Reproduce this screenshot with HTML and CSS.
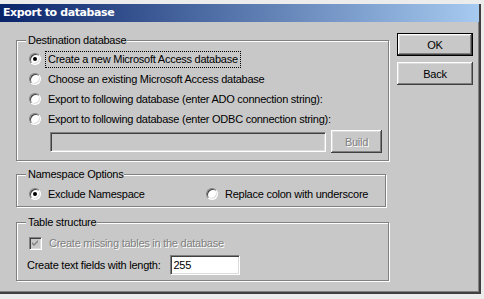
FILE: index.html
```html
<!DOCTYPE html>
<html>
<head>
<meta charset="utf-8">
<link rel="stylesheet" href="styles.css">
</head>
<body>
<div class="window">
  <div class="titlebar">Export to database</div>
  <div class="client">
    <div class="left">
      <div class="group g1">
        <div class="legend">Destination database</div>
        <div class="row"><span class="radio checked"></span><span class="label focus">Create a new Microsoft Access database</span></div>
        <div class="row"><span class="radio"></span><span class="label">Choose an existing Microsoft Access database</span></div>
        <div class="row"><span class="radio"></span><span class="label">Export to following database (enter ADO connection string):</span></div>
        <div class="row"><span class="radio"></span><span class="label">Export to following database (enter ODBC connection string):</span></div>
        <div class="connrow">
          <div class="field disabled"></div>
          <div class="btn build">Build</div>
        </div>
      </div>
      <div class="group g2">
        <div class="legend">Namespace Options</div>
        <div class="row ns">
          <div class="nsitem first"><span class="radio checked"></span><span class="label">Exclude Namespace</span></div>
          <div class="nsitem"><span class="radio"></span><span class="label">Replace colon with underscore</span></div>
        </div>
      </div>
      <div class="group g3">
        <div class="legend">Table structure</div>
        <div class="row chkrow">
          <span class="check">
            <svg width="7" height="7" viewBox="0 0 7 7"><path d="M0 2 L2 4 L6 0 L6 2 L2 6 L0 4 Z" fill="#808080"/></svg>
          </span>
          <span class="label dis">Create missing tables in the database</span>
        </div>
        <div class="lenrow">
          <span class="plain">Create text fields with length:</span>
          <div class="field len">255</div>
        </div>
      </div>
    </div>
    <div class="right">
      <div class="btn default">OK</div>
      <div class="btn">Back</div>
    </div>
  </div>
</div>
</body>
</html>
```

FILE: styles.css
```css
html, body {
  margin: 0;
  padding: 0;
  background: #ececec;
}
body {
  font-family: "Liberation Sans", Arial, sans-serif;
  font-size: 11px;
  letter-spacing: -0.25px;
  color: #000;
  white-space: nowrap;
}
.window {
  margin-top: 4px;
  width: 479px;
  height: 288px;
  background: #c8c8c8;
  border-right: 2px solid #404040;
  border-bottom: 2px solid #404040;
  box-shadow: inset -1px -1px 0 #808080;
  display: flex;
  flex-direction: column;
}
.titlebar {
  height: 18px;
  line-height: 18px;
  padding-left: 3px;
  color: #fff;
  font-weight: bold;
  font-size: 11px;
  letter-spacing: -0.4px;
  font-family: "DejaVu Sans", "Liberation Sans", sans-serif;
  background: linear-gradient(to right, #0a246a, #a6caf0);
}
.client {
  display: flex;
  align-items: flex-start;
}
.left {
  margin-left: 16px;
  margin-top: 18px;
  width: 373px;
  display: flex;
  flex-direction: column;
}
.group {
  border: 1px solid #808080;
  box-shadow: inset 1px 1px 0 #fff, 1px 1px 0 #fff;
  box-sizing: border-box;
  padding: 0 0 0 12px;
}
.legend {
  margin: -7px 0 0 -3px;
  padding: 0 1px 0 2px;
  background: #c8c8c8;
  width: fit-content;
  height: 13px;
  line-height: 13px;
}
.g1 {
  width: 373px;
  height: 121px;
}
.g2 {
  width: 370px;
  height: 33px;
  margin-top: 13px;
}
.g3 {
  width: 373px;
  height: 59px;
  margin-top: 15px;
}
.row {
  display: flex;
  align-items: center;
  height: 20px;
}
.g1 .legend + .row {
  margin-top: 2px;
}
.radio {
  position: relative;
  width: 12px;
  height: 12px;
  box-sizing: border-box;
  border-radius: 50%;
  background: #fff;
  border: 1px solid;
  border-color: #808080 #fff #fff #808080;
  box-shadow: inset 1px 1px 0 #404040, inset -1px -1px 0 #dcdcdc;
  flex: none;
}
.radio.checked::after {
  content: "";
  position: absolute;
  left: 3px;
  top: 3px;
  width: 4px;
  height: 4px;
  border-radius: 50%;
  background: #000;
}
.label {
  margin-left: 4px;
  padding: 1px 2px;
  line-height: 13px;
  border: 1px solid transparent;
}
.label.focus {
  border: 1px dotted #000;
}
.label.dis {
  color: #808080;
  text-shadow: 1px 1px 0 #fff;
}
.connrow {
  display: flex;
  align-items: center;
  margin-top: 1px;
  margin-left: 21px;
}
.field {
  box-sizing: border-box;
  height: 20px;
  border: 1px solid;
  border-color: #808080 #fff #fff #808080;
  box-shadow: inset 1px 1px 0 #404040, inset -1px -1px 0 #dcdcdc;
  background: #fff;
  padding: 3px 0 0 3px;
  line-height: 13px;
}
.field.disabled {
  width: 276px;
  background: #c8c8c8;
}
.btn {
  box-sizing: border-box;
  width: 76px;
  height: 23px;
  display: flex;
  align-items: center;
  justify-content: center;
  background: #c8c8c8;
  box-shadow: inset -1px -1px 0 #404040, inset 1px 1px 0 #fff, inset -2px -2px 0 #808080, inset 2px 2px 0 #dcdcdc;
}
.btn.build {
  width: 51px;
  height: 23px;
  margin-left: 5px;
  color: #808080;
  text-shadow: 1px 1px 0 #fff;
}
.right {
  margin-top: 11px;
  margin-left: 8px;
  display: flex;
  flex-direction: column;
  gap: 6px;
}
.btn.default {
  border: 1px solid #000;
}
.ns {
  margin-top: 3px;
}
.nsitem {
  display: flex;
  align-items: center;
  flex: none;
}
.nsitem.first {
  width: 177px;
}
.chkrow {
  margin-top: 4px;
}
.check {
  width: 13px;
  height: 13px;
  box-sizing: border-box;
  border: 1px solid;
  border-color: #808080 #fff #fff #808080;
  box-shadow: inset 1px 1px 0 #404040, inset -1px -1px 0 #dcdcdc;
  background: #c8c8c8;
  display: flex;
  align-items: center;
  justify-content: center;
  flex: none;
}
.lenrow {
  display: flex;
  align-items: center;
  margin-top: 2px;
  margin-left: -2px;
}
.plain {
  line-height: 13px;
}
.field.len {
  width: 70px;
  margin-left: 9px;
}
```
